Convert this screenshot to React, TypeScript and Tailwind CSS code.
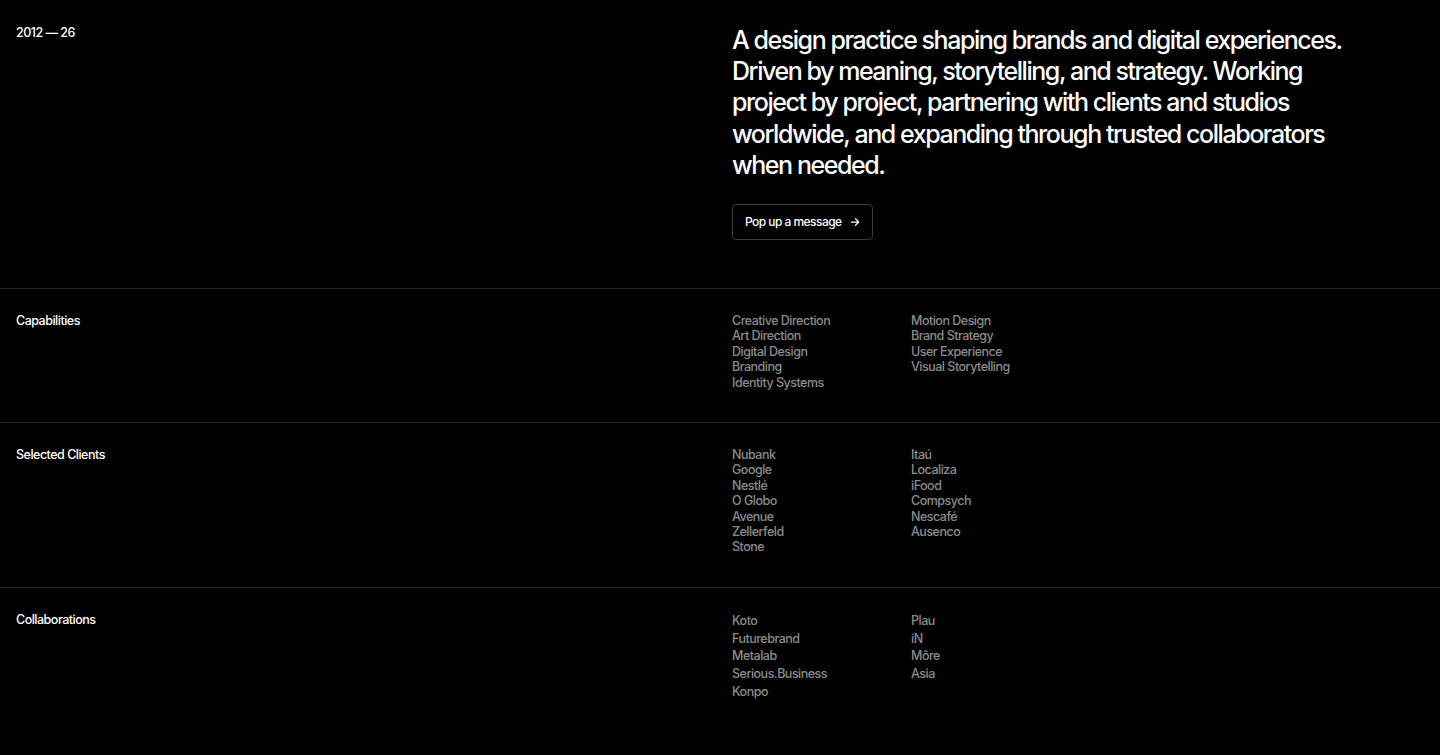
import React from "react";

const font = { fontFamily: "Inter, 'Noto Sans', sans-serif" };

function Section({ label, cols, lh }: { label: string; cols: string[][]; lh: string }) {
  return (
    <section className="border-t border-[#262626] grid grid-cols-2 gap-6 px-4 pt-6 pb-8">
      <div className="text-[12.5px] leading-[15.4px] font-medium text-white tracking-[-0.04em]">{label}</div>
      <div className="grid grid-cols-4 gap-6">
        {cols.map((c, i) => (
          <ul key={i} className={`text-[12.5px] ${lh} font-medium text-[#8c8c8c] tracking-[-0.04em]`}>
            {c.map((t) => (
              <li key={t}>{t}</li>
            ))}
          </ul>
        ))}
      </div>
    </section>
  );
}

export default function App() {
  return (
    <div className="min-h-[755px] bg-black text-white antialiased" style={font}>
      <section className="grid grid-cols-2 gap-6 px-4 pt-[25px] pb-12">
        <div className="text-[12.5px] leading-[15.6px] font-medium tracking-[-0.04em]">2012 — 26</div>
        <div>
          <h1 className="text-[25px] leading-[31.2px] font-medium tracking-[-0.058em] max-w-[640px]">
            A design practice shaping brands and digital experiences. Driven by meaning, storytelling, and strategy.
            Working project by project, partnering with clients and studios worldwide, and expanding through trusted
            collaborators when needed.
          </h1>
          <button className="mt-[23px] h-9 flex items-center gap-2 px-3 rounded border border-[#3a3a3a] text-[12px] font-medium tracking-[-0.045em] text-white">
            Pop up a message
            <svg width="10" height="10" viewBox="0 0 12 12" fill="none" stroke="currentColor" strokeWidth="1.5" strokeLinecap="round" strokeLinejoin="round">
              <path d="M1.5 6h9M6.5 2l4 4-4 4" />
            </svg>
          </button>
        </div>
      </section>
      <Section
        label="Capabilities"
        lh="leading-[15.4px]"
        cols={[
          ["Creative Direction", "Art Direction", "Digital Design", "Branding", "Identity Systems"],
          ["Motion Design", "Brand Strategy", "User Experience", "Visual Storytelling"],
        ]}
      />
      <Section
        label="Selected Clients"
        lh="leading-[15.4px]"
        cols={[
          ["Nubank", "Google", "Nestlé", "O Globo", "Avenue", "Zellerfeld", "Stone"],
          ["Itaú", "Localiza", "iFood", "Compsych", "Nescafé", "Ausenco"],
        ]}
      />
      <Section
        label="Collaborations"
        lh="leading-[17.7px]"
        cols={[
          ["Koto", "Futurebrand", "Metalab", "Serious.Business", "Konpo"],
          ["Plau", "iN", "Môre", "Asia"],
        ]}
      />
    </div>
  );
}
